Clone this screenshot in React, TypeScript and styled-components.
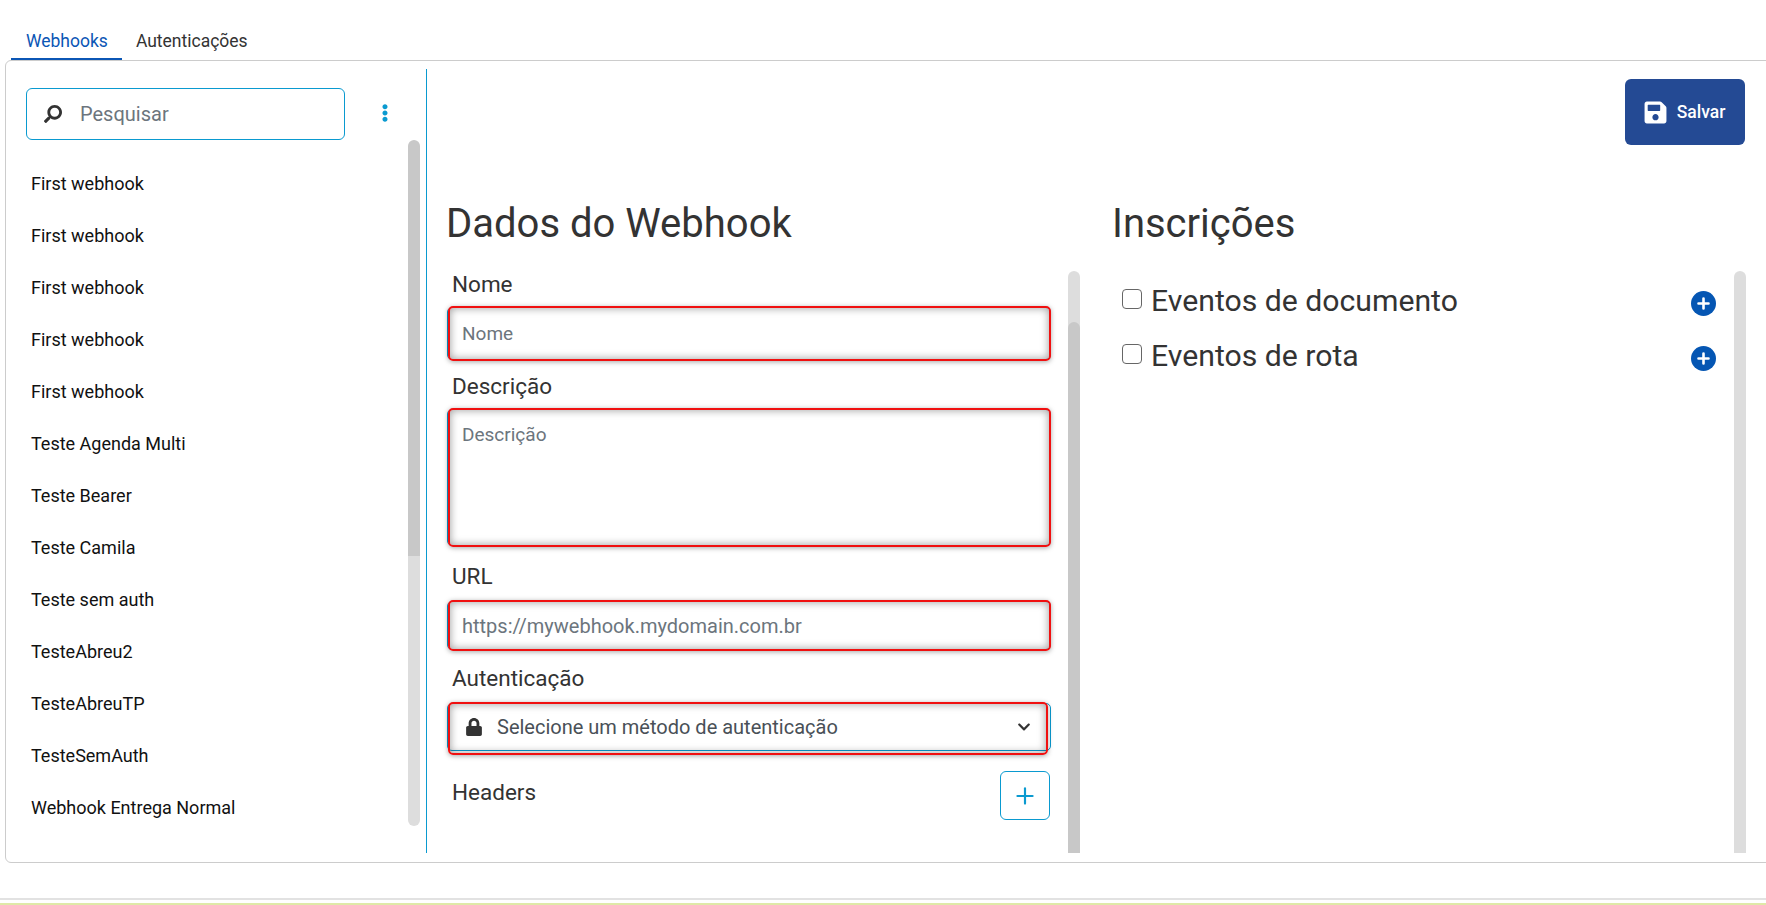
import styled, { createGlobalStyle } from "styled-components";
import { Plus } from "lucide-react";
import { FaChevronDown, FaEllipsisV, FaLock, FaSave, FaSearch } from "react-icons/fa";

const GlobalStyle = createGlobalStyle`
    html, body {
        margin: 0;
        padding: 0;
        background-color: #fff;
        font-family: Roboto, "Liberation Sans", sans-serif;
        color: #333;
    }

    * {
        box-sizing: border-box;
    }
`

const Page = styled.div`
    width: 1766px;
    height: 905px;
    overflow: hidden;
`

const TabBar = styled.div`
    display: flex;
    height: 60px;
    padding: 26px 0 0 11px;
`

const Tab = styled.div<{$active?: boolean}>`
    height: 34px;
    padding: 0 14px 0 ${props => props.$active ? "15px" : "14px"};
    line-height: 30px;
    font-size: 17.5px;
    color: ${props => props.$active ? "#0b56b5" : "#333"};
    border-bottom: 2px solid ${props => props.$active ? "#0b56b5" : "transparent"};
`

const Card = styled.div`
    display: flex;
    width: 1775px;
    height: 803px;
    margin-left: 5px;
    padding: 8px 0 9px;
    border: 1px solid #ccc;
    border-radius: 6px;
`

const Sidebar = styled.aside`
    flex: none;
    display: flex;
    flex-direction: column;
    width: 421px;
    padding: 19px 0 0 20px;
    border-right: 1px solid #0a9ad0;
`

const SearchRow = styled.div`
    display: flex;
    align-items: center;
    height: 52px;
`

const SearchBox = styled.div`
    display: flex;
    align-items: center;
    width: 319px;
    height: 52px;
    padding: 0 0 0 17px;
    gap: 18px;
    font-size: 20px;
    color: #6c757d;
    border: 1px solid #0a9ad0;
    border-radius: 6px;

    svg {
        color: #333;
        font-size: 18px;
        transform: scaleX(-1);
    }
`

const MenuDots = styled.div`
    display: flex;
    margin: 0 0 2px 31px;
    color: #0a9ad0;
    font-size: 18px;
`

const SideBody = styled.div`
    display: flex;
    height: 686px;
`

const List = styled.ul`
    flex: 1;
    margin: 0;
    padding: 18px 0 0 5px;
    list-style: none;
    overflow: hidden;
`

const ListItem = styled.li`
    height: 52px;
    line-height: 52px;
    font-size: 18px;
    color: #111;
`

const Track = styled.div<{$round?: boolean}>`
    flex: none;
    width: 12px;
    background-color: #ddd;
    border-radius: ${props => props.$round ? "6px" : "6px 6px 0 0"};
    overflow: hidden;
    margin-right: ${props => props.$round ? "6px" : "0"};
`

const Thumb = styled.div<{$top: number, $height: number}>`
    margin-top: ${props => props.$top}px;
    height: ${props => props.$height}px;
    background-color: #c8c8c8;
    border-radius: 6px 6px 0 0;
`

const Main = styled.main`
    flex: 1;
    min-width: 0;
    display: flex;
    flex-direction: column;
    padding: 10px 34px 0 20px;
`

const TopBar = styled.div`
    display: flex;
    justify-content: flex-end;
    height: 66px;
`

const SaveButton = styled.button`
    display: flex;
    align-items: center;
    justify-content: center;
    gap: 9px;
    width: 120px;
    height: 66px;
    padding: 0 2px 0 0;
    font-family: inherit;
    font-size: 17.5px;
    font-weight: 500;
    color: #fff;
    background-color: #244a94;
    border: none;
    border-radius: 6px;

    svg {
        font-size: 25px;
    }
`

const Columns = styled.div`
    display: grid;
    grid-template-columns: 633px 633px;
    column-gap: 33px;
    margin-top: 52px;
`

const Heading = styled.h2`
    height: 52px;
    margin: 0 0 22px -1px;
    line-height: 54px;
    font-size: 40px;
    font-weight: 400;
    color: #333;
`

const ColumnBody = styled.div`
    display: flex;
    justify-content: space-between;
    height: 582px;
`

const Fields = styled.div`
    width: 604px;
`

const Field = styled.div<{$gap?: number}>`
    margin-top: ${props => props.$gap ?? 0}px;
`

const Label = styled.label<{$space?: number}>`
    display: block;
    height: 26px;
    margin-bottom: ${props => props.$space ?? 10}px;
    padding-left: 5px;
    line-height: 26px;
    font-size: 22.5px;
    color: #333;
`

const InputBox = styled.div<{$height: number, $font?: number}>`
    position: relative;
    height: ${props => props.$height}px;
    padding: 0 14px;
    display: flex;
    align-items: center;
    font-size: ${props => props.$font ?? 20}px;
    color: #6c757d;
    border: 1px solid #0a9ad0;
    border-radius: 5px;

    &::after {
        content: "";
        position: absolute;
        inset: -2px -1px -2px 0;
        border: 2px solid #f01010;
        border-radius: 5px;
        box-shadow: 0 1px 5px rgba(0, 0, 0, 0.35), inset 0 0 8px rgba(0, 0, 0, 0.4);
    }
`

const TextAreaBox = styled(InputBox)`
    align-items: flex-start;
    padding-top: 13px;
`

const SelectBox = styled(InputBox)`
    gap: 14px;
    padding: 0 19px 0 17px;
    color: #495057;

    svg:first-child {
        font-size: 18px;
        color: #333;
    }

    svg:last-child {
        margin-left: auto;
        font-size: 14px;
        color: #333;
    }

    &::after {
        inset: -2px 2px -5px 0;
    }
`

const HeaderRow = styled.div`
    display: flex;
    justify-content: space-between;
    margin-top: 20px;

    label {
        margin-top: 8px;
    }
`

const AddButton = styled.button`
    display: flex;
    align-items: center;
    justify-content: center;
    width: 50px;
    height: 49px;
    margin-right: 1px;
    padding: 0;
    color: #0a9ad0;
    background-color: #fff;
    border: 1px solid #0a9ad0;
    border-radius: 6px;
`

const EventList = styled.div`
    flex: 1;
    padding: 0 18px 0 9px;
`

const EventRow = styled.div`
    display: flex;
    align-items: center;
    height: 55px;
    padding-top: 4px;
    font-size: 30.2px;
    color: #333;
`

const Check = styled.input.attrs({type: "checkbox"})`
    appearance: none;
    width: 20px;
    height: 20px;
    margin: -4px 9px 0 0;
    border: 1.5px solid #666;
    border-radius: 4px;
`

const ExpandIcon = styled.svg`
    flex: none;
    width: 25px;
    height: 25px;
    margin: 5px 0 0 auto;
`

const Footer = styled.footer`
    height: 7px;
    margin-top: 35px;
    border-top: 2px solid #e2e2e2;
    border-bottom: 2px solid #dfe9a8;
`

const webhooks = [
    "First webhook",
    "First webhook",
    "First webhook",
    "First webhook",
    "First webhook",
    "Teste Agenda Multi",
    "Teste Bearer",
    "Teste Camila",
    "Teste sem auth",
    "TesteAbreu2",
    "TesteAbreuTP",
    "TesteSemAuth",
    "Webhook Entrega Normal",
];

const Expand = () => (
    <ExpandIcon viewBox="0 0 25 25">
        <circle cx="12.5" cy="12.5" r="12.5" fill="#0556b3" />
        <path d="M12.5 7.5v10M7.5 12.5h10" stroke="#fff" strokeWidth="2.6" strokeLinecap="round" />
    </ExpandIcon>
);

export default function App() {
    return (
        <Page>
            <GlobalStyle />
            <TabBar>
                <Tab $active>Webhooks</Tab>
                <Tab>Autenticações</Tab>
            </TabBar>

            <Card>
                <Sidebar>
                    <SearchRow>
                        <SearchBox><FaSearch />Pesquisar</SearchBox>
                        <MenuDots><FaEllipsisV /></MenuDots>
                    </SearchRow>
                    <SideBody>
                        <List>
                            {webhooks.map((name, i) => <ListItem key={i}>{name}</ListItem>)}
                        </List>
                        <Track $round><Thumb $top={0} $height={416} /></Track>
                    </SideBody>
                </Sidebar>

                <Main>
                    <TopBar>
                        <SaveButton><FaSave />Salvar</SaveButton>
                    </TopBar>

                    <Columns>
                        <section>
                            <Heading>Dados do Webhook</Heading>
                            <ColumnBody>
                                <Fields>
                                    <Field>
                                        <Label>Nome</Label>
                                        <InputBox $height={53} $font={19}>Nome</InputBox>
                                    </Field>
                                    <Field $gap={13}>
                                        <Label>Descrição</Label>
                                        <TextAreaBox $height={137} $font={19}>Descrição</TextAreaBox>
                                    </Field>
                                    <Field $gap={17}>
                                        <Label $space={12}>URL</Label>
                                        <InputBox $height={49}>https://mywebhook.mydomain.com.br</InputBox>
                                    </Field>
                                    <Field $gap={15}>
                                        <Label $space={12}>Autenticação</Label>
                                        <SelectBox $height={48}>
                                            <FaLock />
                                            Selecione um método de autenticação
                                            <FaChevronDown />
                                        </SelectBox>
                                    </Field>
                                    <HeaderRow>
                                        <Label>Headers</Label>
                                        <AddButton><Plus size={26} strokeWidth={2} /></AddButton>
                                    </HeaderRow>
                                </Fields>
                                <Track><Thumb $top={51} $height={531} /></Track>
                            </ColumnBody>
                        </section>

                        <section>
                            <Heading>Inscrições</Heading>
                            <ColumnBody>
                                <EventList>
                                    <EventRow><Check />Eventos de documento<Expand /></EventRow>
                                    <EventRow><Check />Eventos de rota<Expand /></EventRow>
                                </EventList>
                                <Track />
                            </ColumnBody>
                        </section>
                    </Columns>
                </Main>
            </Card>

            <Footer />
        </Page>
    )
}
